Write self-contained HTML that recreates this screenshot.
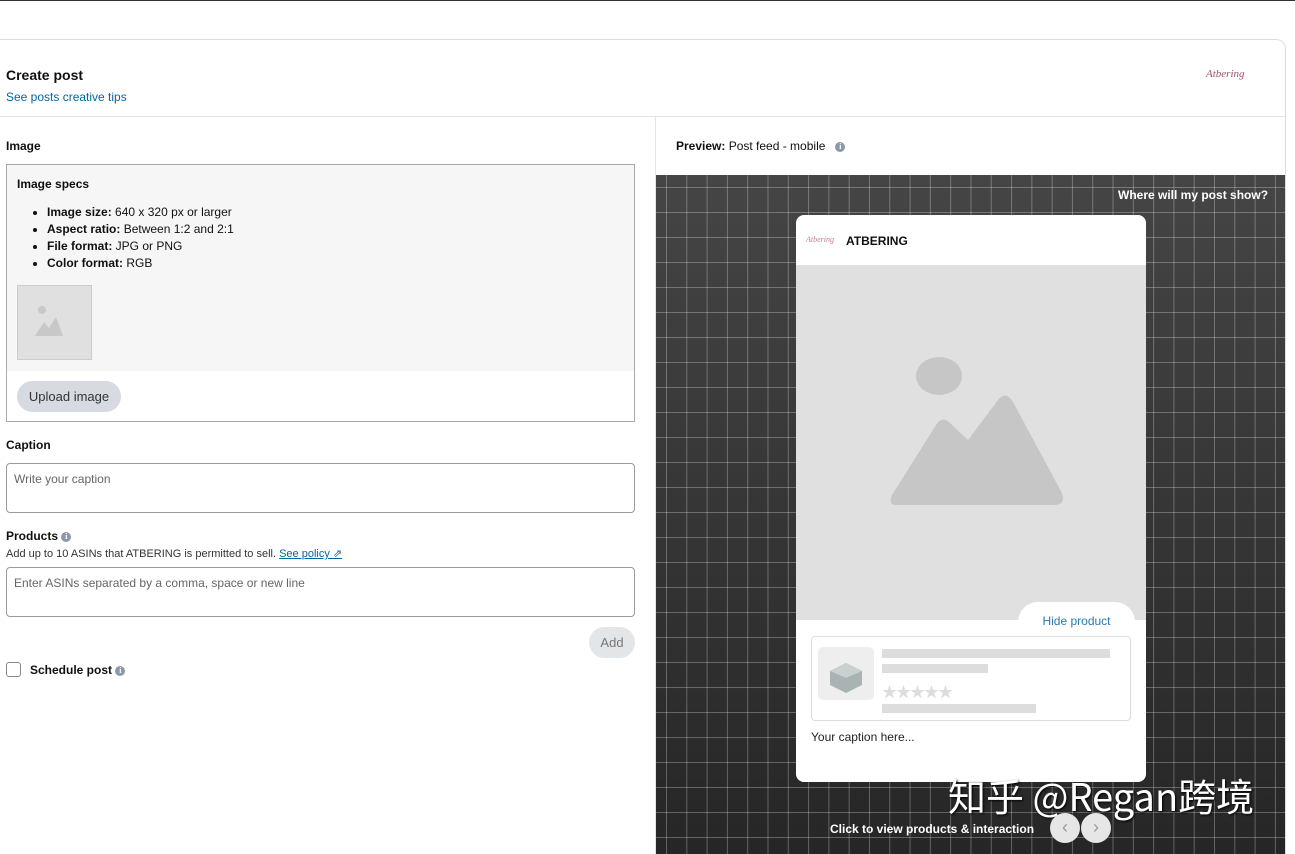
<!DOCTYPE html>
<html><head><meta charset="utf-8"><style>
*{box-sizing:border-box;margin:0;padding:0}
html,body{width:1295px;height:854px;overflow:hidden}
body{background:#fff;font-family:"Liberation Sans","Noto Sans CJK SC",sans-serif;color:#0f1111;position:relative}
.abs{position:absolute}
.b{font-weight:bold}
.i{display:inline-block;width:10px;height:10px;border-radius:50%;background:#8a99a8;color:#fff;font-size:8px;line-height:10px;text-align:center;font-weight:bold;vertical-align:1px;font-family:"Liberation Serif",serif}
</style></head><body>
<div class="abs" style="left:0;top:0;width:1295px;height:1px;background:#333"></div>
<div class="abs" style="left:-10px;top:39px;width:1296px;height:815px;border:1px solid #ddd;border-bottom:none;border-radius:10px 10px 0 0"></div>
<div class="abs" style="left:0;top:116px;width:1285px;height:1px;background:#e3e3e3"></div>
<div class="abs b" style="left:6px;top:67px;font-size:14px">Create post</div>
<div class="abs" style="left:6px;top:90px;font-size:12px;color:#0066a3">See posts creative tips</div>
<div class="abs" style="left:1206px;top:68px;font-size:11px;font-style:italic;color:#a05070;font-family:'Liberation Serif',serif">Atbering</div>

<div class="abs b" style="left:6px;top:139px;font-size:12px">Image</div>
<div class="abs" style="left:6px;top:164px;width:629px;height:258px;border:1px solid #aaa;background:#fff">
 <div style="background:#f6f6f6;height:206px;padding:12px 10px">
  <div class="b" style="font-size:12px">Image specs</div>
  <ul style="font-size:12px;line-height:17px;margin:13px 0 0 30px">
   <li><b>Image size:</b> 640 x 320 px or larger</li>
   <li><b>Aspect ratio:</b> Between 1:2 and 2:1</li>
   <li><b>File format:</b> JPG or PNG</li>
   <li><b>Color format:</b> RGB</li>
  </ul>
  <div style="width:75px;height:75px;border:1px solid #ccc;background:#e0e0e0;margin-top:13px;position:relative">
   <svg width="75" height="75" class="abs" style="left:0;top:0"><circle cx="24" cy="24" r="4" fill="#c8c8c8"/><path d="M17 50 L26 36 L31 42 L38 31 L45 50 Z" fill="#c8c8c8"/></svg>
  </div>
 </div>
 <div style="position:absolute;left:10px;top:216px;width:104px;height:31px;border-radius:16px;background:#d5dbe1;font-size:13px;color:#333;text-align:center;line-height:31px">Upload image</div>
</div>

<div class="abs b" style="left:6px;top:438px;font-size:12px">Caption</div>
<div class="abs" style="left:6px;top:463px;width:629px;height:50px;border:1px solid #999;border-radius:4px;font-size:12px;color:#666;padding:8px 7px">Write your caption</div>
<div class="abs b" style="left:6px;top:529px;font-size:12px">Products <span class="i">i</span></div>
<div class="abs" style="left:6px;top:547px;font-size:11px;color:#333">Add up to 10 ASINs that ATBERING is permitted to sell. <span style="color:#0066a3;text-decoration:underline">See policy ⇗</span></div>
<div class="abs" style="left:6px;top:567px;width:629px;height:50px;border:1px solid #999;border-radius:4px;font-size:12px;color:#666;padding:8px 7px">Enter ASINs separated by a comma, space or new line</div>
<div class="abs" style="left:589px;top:627px;width:46px;height:31px;border-radius:16px;background:#e3e6e9;font-size:13px;color:#777;text-align:center;line-height:31px">Add</div>
<div class="abs" style="left:6px;top:662px;width:15px;height:15px;border:1px solid #888;border-radius:3px"></div>
<div class="abs b" style="left:30px;top:663px;font-size:12px">Schedule post <span class="i">i</span></div>

<div class="abs" style="left:655px;top:116px;width:1px;height:738px;background:#e3e3e3"></div>
<div class="abs" style="left:676px;top:139px;font-size:12px"><b>Preview:</b> Post feed - mobile &nbsp; <span class="i">i</span></div>
<div class="abs" style="left:656px;top:175px;width:629px;height:679px;background-color:#333;background-image:linear-gradient(rgba(255,255,255,.28) 1px,transparent 1px),linear-gradient(90deg,rgba(255,255,255,.28) 1px,transparent 1px),linear-gradient(#454545,#262626);background-size:20.3px 25px,20.3px 25px,100% 100%;background-position:10px 12px,10px 12px,0 0"></div>
<div class="abs b" style="left:1118px;top:188px;font-size:12px;color:#fff">Where will my post show?</div>

<div class="abs" style="left:796px;top:215px;width:350px;height:567px;background:#fff;border-radius:8px;overflow:hidden">
 <div class="abs" style="left:10px;top:20px;font-size:8px;font-style:italic;color:#c08090;font-family:'Liberation Serif',serif">Atbering</div>
 <div class="abs b" style="left:50px;top:19px;font-size:12px">ATBERING</div>
 <div class="abs" style="left:0;top:50px;width:350px;height:355px;background:#e0e0e0">
  <svg width="350" height="355"><ellipse cx="143" cy="111" rx="23" ry="19" fill="#c6c6c6"/><path d="M100 240 Q92 240 96 230 L140 160 Q146 150 154 158 L172 175 L202 135 Q210 125 217 137 L266 228 Q270 240 258 240 Z" fill="#c6c6c6"/></svg>
 </div>
 <div class="abs" style="left:222px;top:387px;width:117px;height:40px;background:#fff;border-radius:20px 20px 0 0;font-size:12px;color:#2a7ab0;text-align:center;padding-top:12px">Hide product</div>
 <div class="abs" style="left:15px;top:421px;width:320px;height:85px;border:1px solid #ddd;border-radius:4px">
  <div class="abs" style="left:6px;top:10px;width:56px;height:53px;background:#eee;border-radius:5px">
   <svg width="56" height="53"><path d="M12 24 L28 16 L44 24 L44 38 L28 46 L12 38Z" fill="#aab3b3"/><path d="M12 24 L28 31 L44 24 L28 16Z" fill="#c9d0d0"/></svg>
  </div>
  <div class="abs" style="left:70px;top:12px;width:228px;height:9px;background:#ddd"></div>
  <div class="abs" style="left:70px;top:27px;width:106px;height:9px;background:#ddd"></div>
  <div class="abs" style="left:70px;top:44px;font-size:15px;color:#ddd;letter-spacing:-1px">★★★★★</div>
  <div class="abs" style="left:70px;top:67px;width:154px;height:9px;background:#ddd"></div>
 </div>
 <div class="abs" style="left:15px;top:515px;font-size:12px;color:#222">Your caption here...</div>
</div>

<div class="abs" style="left:948px;top:772px;font-size:38px;line-height:46px;color:#fff;text-shadow:1px 1px 2px #000;font-family:'Noto Sans CJK SC',sans-serif;white-space:nowrap">知乎 @Regan跨境</div>
<div class="abs b" style="left:830px;top:822px;font-size:12px;color:#fff">Click to view products &amp; interaction</div>
<div class="abs" style="left:1050px;top:813px;width:30px;height:30px;border-radius:50%;background:#e6e6e6;color:#999;text-align:center;line-height:28px;font-size:18px">‹</div>
<div class="abs" style="left:1081px;top:813px;width:30px;height:30px;border-radius:50%;background:#e6e6e6;color:#999;text-align:center;line-height:28px;font-size:18px">›</div>
</body></html>
